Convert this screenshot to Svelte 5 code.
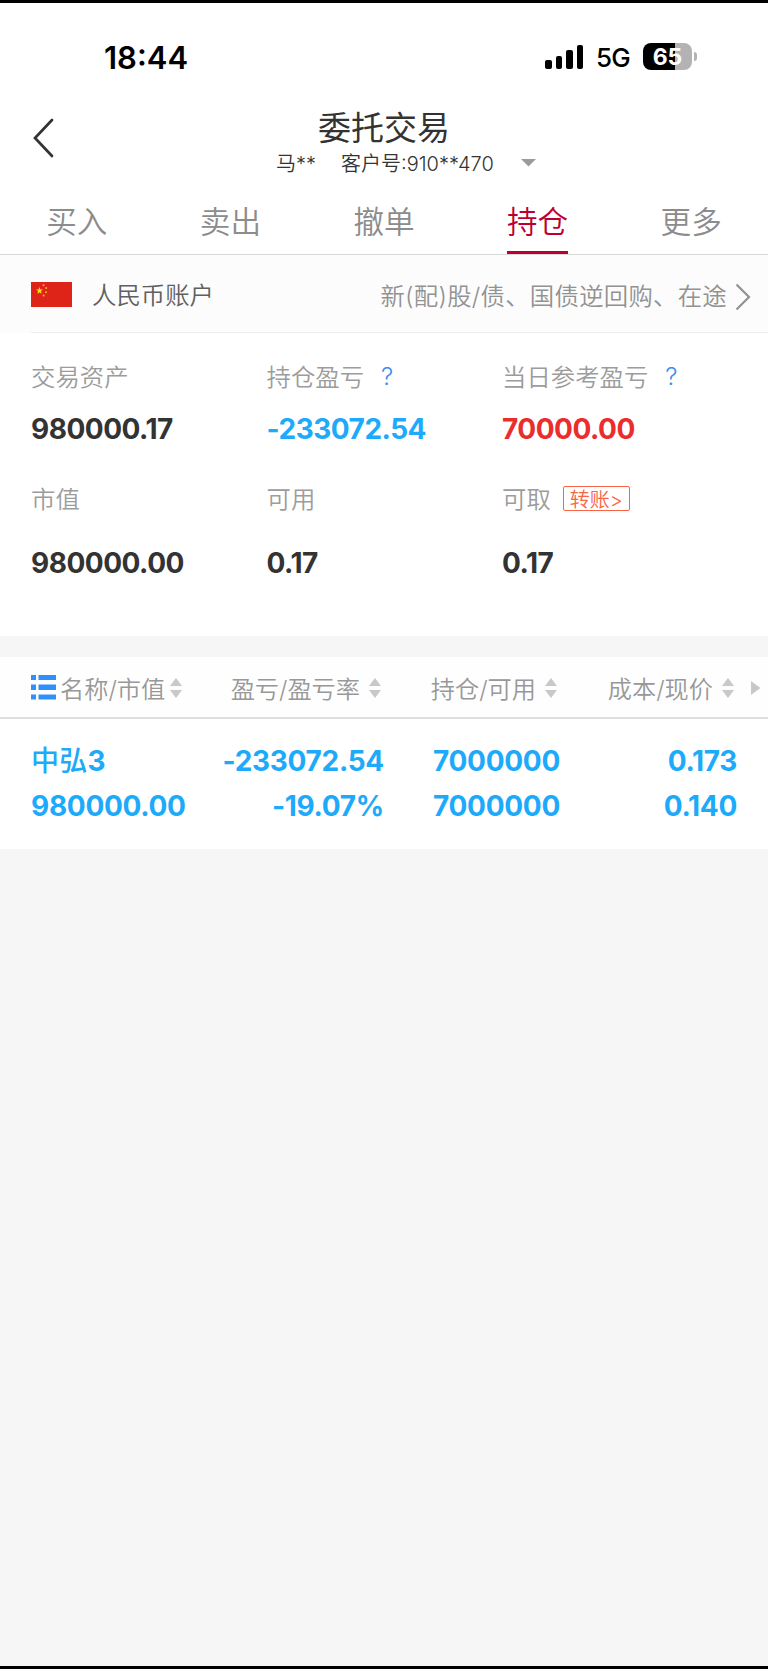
<script lang="ts">
	const signal = [9, 13, 19, 24];

	const tabs = ['买入', '卖出', '撤单', '持仓', '更多'];
	let activeTab = $state('持仓');

	const stats = [
		{ label: '交易资产', value: '980000.17' },
		{ label: '持仓盈亏', value: '-233072.54', tone: 'down', help: true },
		{ label: '当日参考盈亏', value: '70000.00', tone: 'up', help: true },
		{ label: '市值', value: '980000.00' },
		{ label: '可用', value: '0.17' },
		{ label: '可取', value: '0.17', transfer: true }
	];

	const columns = ['名称/市值', '盈亏/盈亏率', '持仓/可用', '成本/现价'];

	const holdings = [
		{
			name: '中弘',
			series: '3',
			marketValue: '980000.00',
			cells: [
				['-233072.54', '-19.07%'],
				['7000000', '7000000'],
				['0.173', '0.140']
			]
		}
	];
</script>

<div class="screen">
	<div class="status-bar">
		<span class="time">18:44</span>
		<div class="signal">
			{#each signal as height}
				<i style="height: {height}px"></i>
			{/each}
		</div>
		<span class="network">5G</span>
		<div class="battery">65</div>
		<i class="nub"></i>
	</div>

	<header>
		<button class="back" aria-label="返回">
			<svg width="22" height="40" viewBox="0 0 22 40" fill="none" stroke="#333" stroke-width="2.7" stroke-linecap="round">
				<path d="M19 2 2 20l17 18" />
			</svg>
		</button>
		<div class="heading">
			<h1>委托交易</h1>
			<div class="customer">
				<span class="name">马**</span>
				<span>客户号:910**470</span>
				<svg width="15" height="8" viewBox="0 0 15 8"><path d="M0 0h15L7.5 7.5z" fill="#9b9b9b" /></svg>
			</div>
		</div>
	</header>

	<nav>
		{#each tabs as tab}
			<button class:active={tab === activeTab} onclick={() => (activeTab = tab)}>
				<span>{tab}</span>
			</button>
		{/each}
	</nav>

	<div class="account">
		<svg class="flag" width="41" height="25" viewBox="0 0 41 25">
			<path fill="#de2419" d="M0 0h41v25H0z" />
			<path fill="#ffe600" d="m8.5 5 .9 2.5H12l-2.1 1.6.8 2.6-2.2-1.5-2.2 1.5.8-2.6L5 7.5h2.6z" />
			<g fill="#f5b916">
				<circle cx="12.5" cy="3.3" r="1" />
				<circle cx="15.2" cy="6" r="1" />
				<circle cx="15" cy="10.2" r="1" />
				<circle cx="12.6" cy="13.4" r="1" />
			</g>
		</svg>
		<span class="currency">人民币账户</span>
		<span class="more">新(配)股/债、国债逆回购、在途</span>
		<svg class="chevron" width="16" height="28" viewBox="0 0 16 28" fill="none" stroke="#929292" stroke-width="2.2">
			<path d="m1.5 1.5 12.5 12.5-12.5 12.5" />
		</svg>
	</div>

	<section class="stats">
		{#each stats as stat}
			<div class="stat">
				<div class="label">
					{stat.label}
					{#if stat.help}<span class="help">?</span>{/if}
					{#if stat.transfer}<button class="transfer">转账&gt;</button>{/if}
				</div>
				<div class="value {stat.tone ?? ''}">{stat.value}</div>
			</div>
		{/each}
	</section>

	<section class="holdings">
		<div class="row head">
			{#each columns as column, i}
				<div class="cell">
					{#if i === 0}
						<svg class="list" width="25" height="25" viewBox="0 0 25 25" fill="#308ffa">
							<path d="M0 0h5v5H0zM7.5 0H25v5H7.5zM0 9.5h5v5.5H0zM7.5 9.5H25v5.5H7.5zM0 19.5h5v5H0zM7.5 19.5H25v5H7.5z" />
						</svg>
					{/if}
					<span>{column}</span>
					<svg class="sort" width="12" height="20" viewBox="0 0 12 20" fill="#c8c8c8">
						<path d="M6 0l6 8H0zM0 12h12l-6 8z" />
					</svg>
				</div>
			{/each}
			<svg class="next" width="10" height="14" viewBox="0 0 10 14"><path d="M0 0l9.5 7L0 14z" fill="#c8c8c8" /></svg>
		</div>
		{#each holdings as holding}
			<div class="row item">
				<div class="cell">
					<div><span class="stock">{holding.name}</span>{holding.series}</div>
					<div>{holding.marketValue}</div>
				</div>
				{#each holding.cells as [first, second]}
					<div class="cell">
						<div>{first}</div>
						<div>{second}</div>
					</div>
				{/each}
			</div>
		{/each}
	</section>
</div>

<style>
	:global(body) {
		background: #f6f6f6;
	}

	.screen {
		box-sizing: border-box;
		height: 1669px;
		border-top: 3px solid #000;
		border-bottom: 3px solid #000;
		background: #f6f6f6;
		color: #333;
		font-family: Inter, 'Noto Sans CJK SC', sans-serif;
		font-weight: 350;
		overflow: hidden;
	}

	button {
		border: 0;
		padding: 0;
		background: none;
		color: inherit;
		font: inherit;
	}

	svg {
		display: block;
		flex: none;
	}

	.status-bar {
		display: flex;
		align-items: center;
		height: 107px;
		box-sizing: border-box;
		padding: 0 71px 0 104px;
		background: #fff;
		color: #000;
	}

	.time {
		flex: 1;
		padding-top: 1px;
		font-size: 31px;
		font-weight: 600;
	}

	.signal {
		display: flex;
		align-items: flex-end;
		gap: 4px;
		height: 24px;
		margin-right: 13px;
	}

	.signal i {
		width: 6.5px;
		border-radius: 2px;
		background: #000;
	}

	.network {
		width: 47px;
		padding-top: 2px;
		font-size: 26px;
		font-weight: 450;
		letter-spacing: -0.9px;
	}

	.battery {
		width: 49px;
		height: 27px;
		border-radius: 8px;
		background: linear-gradient(90deg, #000 65%, #b3b3b3 65%);
		color: #fff;
		font-size: 23px;
		font-weight: 700;
		line-height: 28px;
		text-align: center;
	}

	.nub {
		width: 3px;
		height: 9px;
		margin-left: 2px;
		border-radius: 0 4px 4px 0;
		background: #b3b3b3;
	}

	header {
		display: grid;
		grid-template-columns: 100px 1fr 100px;
		height: 80px;
		background: #fff;
	}

	.back {
		align-self: start;
		margin: 8px 0 0 33px;
		width: 22px;
	}

	.heading {
		display: flex;
		flex-direction: column;
		align-items: center;
	}

	h1 {
		margin: 0;
		font-size: 33px;
		font-weight: 400;
		line-height: 36px;
	}

	.customer {
		display: flex;
		align-items: center;
		align-self: flex-start;
		margin-left: 176px;
		height: 32px;
		font-size: 20px;
		white-space: pre;
	}

	.name {
		width: 65px;
	}

	.customer svg {
		margin: 2px 0 0 27px;
	}

	nav {
		display: grid;
		grid-template-columns: repeat(5, 1fr);
		height: 64px;
		border-bottom: 1px solid #d8d8d8;
		background: #fff;
		color: #8c8c8c;
		font-size: 30.6px;
	}

	nav span {
		display: inline-block;
		box-sizing: border-box;
		height: 64px;
		line-height: 63px;
		border-bottom: 3px solid transparent;
	}

	.active span {
		border-color: #bd0030;
		color: #bd0030;
	}

	.account {
		display: flex;
		align-items: center;
		height: 78px;
		padding: 0 17px 0 31px;
		background: linear-gradient(#ececec, #ececec) 31px 100% / 100% 1px no-repeat #fcfcfc;
		font-size: 24.4px;
	}

	.currency {
		flex: 1;
		margin-left: 20px;
		padding-bottom: 2px;
		color: #606060;
	}

	.more {
		margin-right: 8px;
		color: #929292;
		letter-spacing: 0.25px;
	}

	.chevron {
		margin-top: 5px;
	}

	.stats {
		display: grid;
		grid-template-columns: 235.5px 235.5px 1fr;
		grid-template-rows: 122px 1fr;
		height: 303px;
		box-sizing: border-box;
		padding: 24px 0 0 31px;
		background: #fff;
	}

	.label {
		display: flex;
		align-items: center;
		height: 36px;
		color: #9c9c9c;
		font-size: 24.4px;
	}

	.help {
		margin-left: 17px;
		padding-top: 2px;
		color: #3d8bf0;
	}

	.transfer {
		box-sizing: border-box;
		height: 25px;
		margin: 2px 0 0 12px;
		padding: 1px 6px 0;
		border: 1px solid #fa6446;
		border-radius: 2px;
		color: #fa6446;
		font-size: 20px;
		line-height: 24px;
	}

	.value {
		height: 32px;
		margin-top: 20px;
		font-size: 28px;
		font-weight: 700;
		letter-spacing: -0.5px;
		line-height: 32px;
	}

	.stat:nth-child(n + 4) .value {
		margin-top: 32px;
	}

	.down {
		color: #1eaafa;
	}

	.up {
		color: #eb2d2d;
	}

	.holdings {
		margin-top: 21px;
		background: #fff;
	}

	.row {
		display: grid;
		grid-template-columns: 182px 171px 176px 177px 1fr;
		padding-left: 31px;
	}

	.head {
		align-items: center;
		height: 60px;
		padding-top: 1px;
		box-sizing: border-box;
		border-bottom: 2px solid #dedede;
		background: #fefefe;
		color: #989898;
		font-size: 24.2px;
		height: 62px;
	}

	.head .cell {
		display: flex;
		align-items: center;
		justify-content: flex-end;
		padding-right: 3px;
	}

	.head .cell:first-child {
		justify-content: flex-start;
	}

	.list {
		margin-right: 4px;
	}

	.sort {
		margin-left: 9px;
	}

	.cell:first-child .sort {
		margin-left: 5px;
	}

	.next {
		margin-left: 14px;
	}

	.item {
		height: 130px;
		box-sizing: border-box;
		padding-top: 20px;
		color: #1eaafa;
		font-size: 28px;
		font-weight: 700;
		letter-spacing: -0.3px;
		line-height: 45px;
	}

	.item .cell:not(:first-child) {
		text-align: right;
	}

	.stock {
		font-weight: 500;
		letter-spacing: 0.3px;
	}
</style>
